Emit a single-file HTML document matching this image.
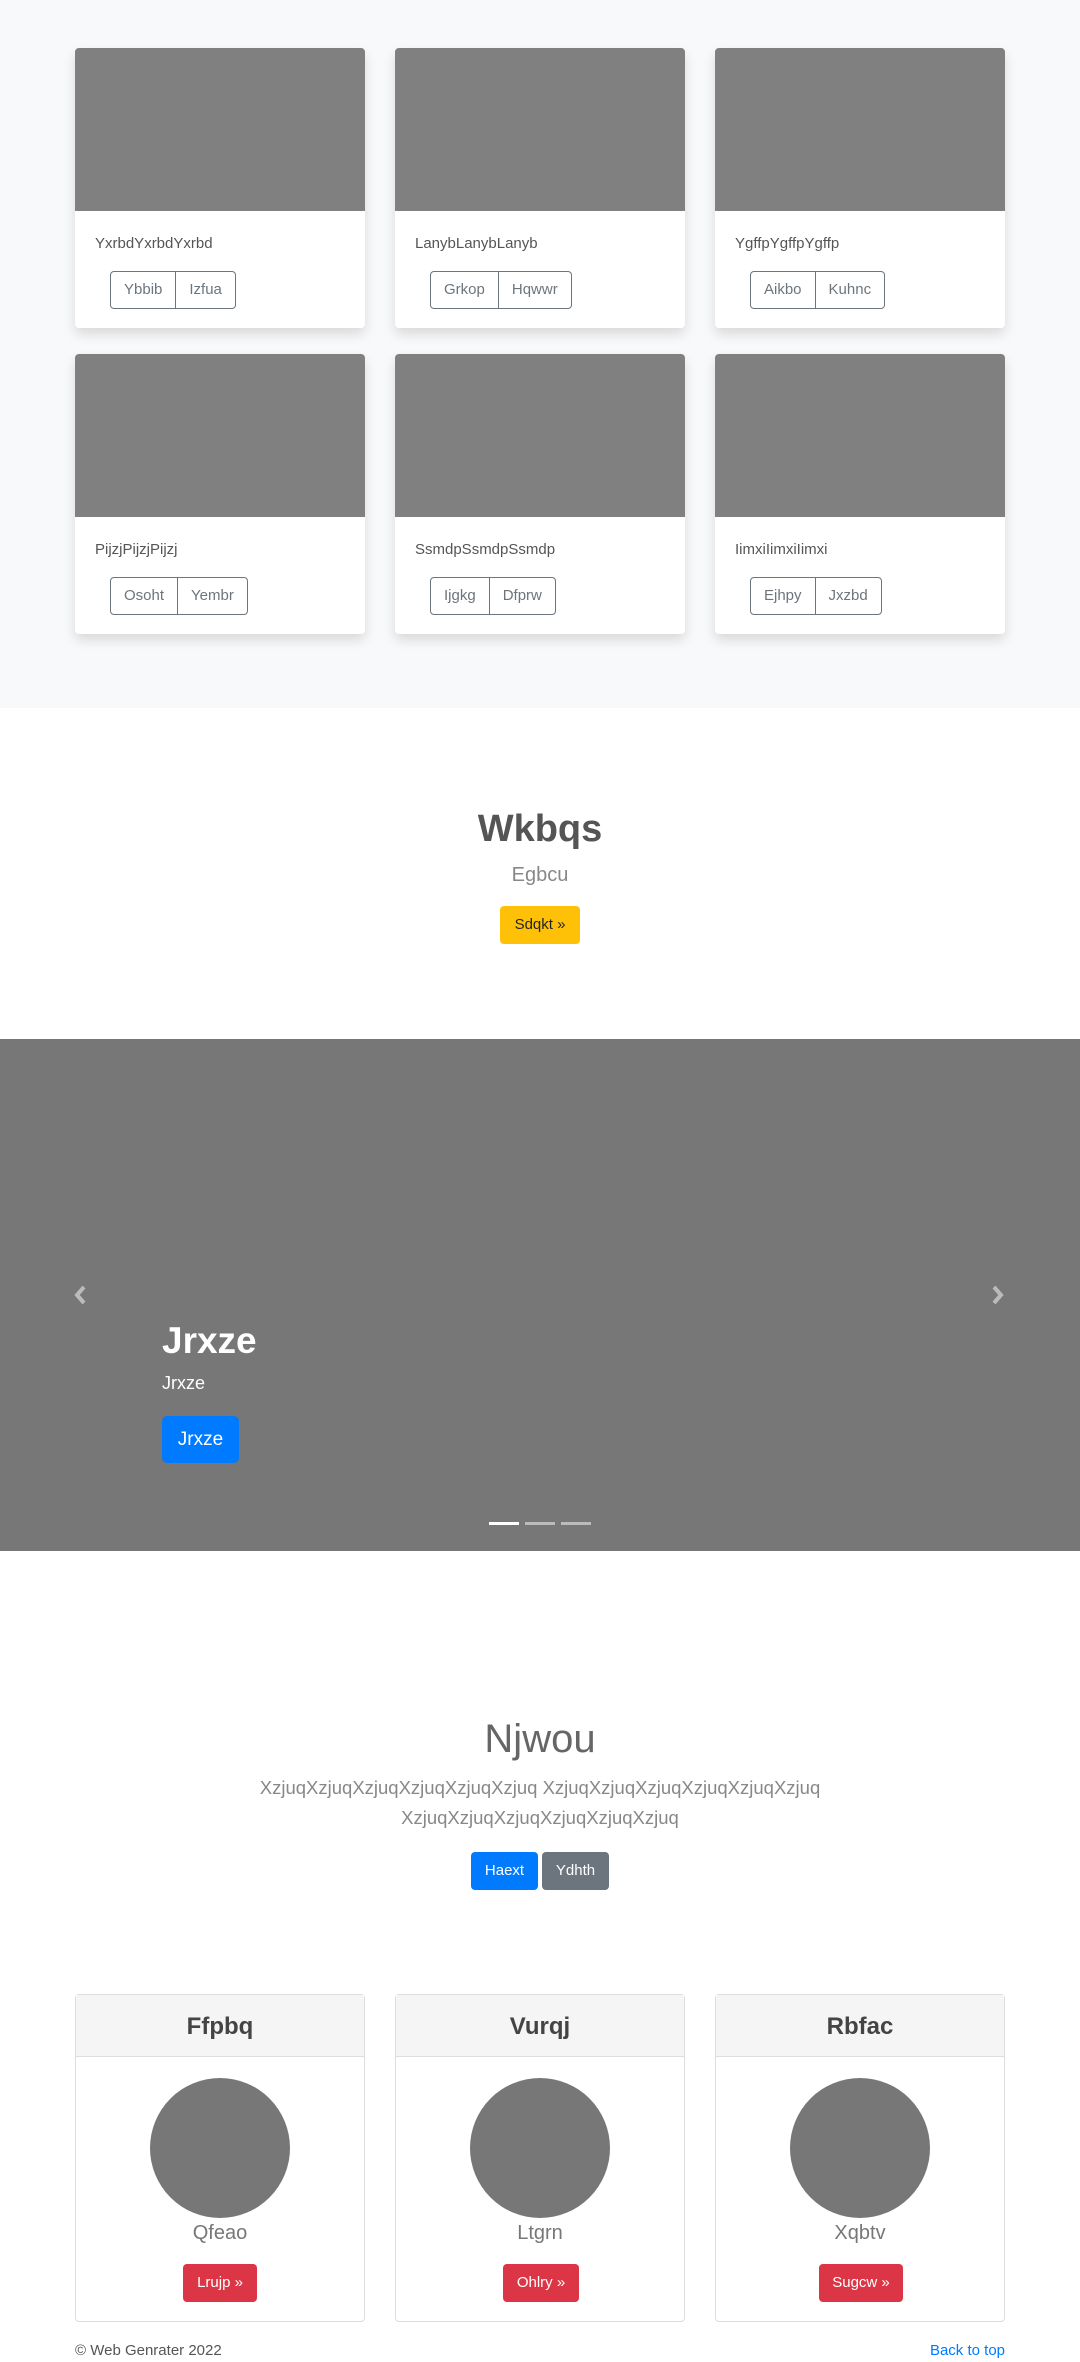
<!DOCTYPE html>
<html><head><meta charset="utf-8">
<style>
*{box-sizing:border-box;margin:0;padding:0}
body{width:1080px;height:2362px;position:relative;font-family:"Liberation Sans",sans-serif;color:#212529;background:#fff;overflow:hidden}
.abs{position:absolute}
.top{left:0;top:0;width:1080px;height:708px;background:#f8f9fa}
.card{position:absolute;width:290px;height:280px;background:#fff;border-radius:4px;box-shadow:0 6px 12px rgba(0,0,0,.13);overflow:hidden}
.card .img{height:163px;background:#808080}
.card .t{position:absolute;left:20px;top:187px;font-size:15px;color:#555}
.grp{position:absolute;left:35px;top:223px;display:flex;height:38px;border:1px solid #6c757d;border-radius:4px}
.grp span{font-size:15px;color:#6c757d;padding:0 13px;line-height:36px}
.grp span+span{border-left:1px solid #6c757d}
.c{text-align:center;left:0;width:1080px}
.btn{position:absolute;border-radius:4px;text-align:center;font-size:15px}
.pc{position:absolute;top:1994px;width:290px;height:328px;border:1px solid #ddd;border-radius:4px}
.pc .h{height:62px;background:#f5f5f5;border-bottom:1px solid #ddd;text-align:center;font-size:24px;font-weight:bold;color:#444;line-height:64px}
.pc .circ{position:absolute;left:74px;top:83px;width:140px;height:140px;border-radius:50%;background:#777}
.pc .n{position:absolute;left:0;width:100%;top:227px;text-align:center;font-size:20px;color:#777}
.pc .b{position:absolute;top:269px;height:38px;line-height:38px;background:#dc3545;color:#fff;border-radius:4px;font-size:15px;text-align:center}
</style></head><body>
<div class="abs top"></div>
<div class="card" style="left:75px;top:48px"><div class="img"></div><div class="t">YxrbdYxrbdYxrbd</div><div class="grp"><span>Ybbib</span><span>Izfua</span></div></div>
<div class="card" style="left:395px;top:48px"><div class="img"></div><div class="t">LanybLanybLanyb</div><div class="grp"><span>Grkop</span><span>Hqwwr</span></div></div>
<div class="card" style="left:715px;top:48px"><div class="img"></div><div class="t">YgffpYgffpYgffp</div><div class="grp"><span>Aikbo</span><span>Kuhnc</span></div></div>
<div class="card" style="left:75px;top:354px"><div class="img"></div><div class="t">PijzjPijzjPijzj</div><div class="grp"><span>Osoht</span><span>Yembr</span></div></div>
<div class="card" style="left:395px;top:354px"><div class="img"></div><div class="t">SsmdpSsmdpSsmdp</div><div class="grp"><span>Ijgkg</span><span>Dfprw</span></div></div>
<div class="card" style="left:715px;top:354px"><div class="img"></div><div class="t">IimxiIimxiIimxi</div><div class="grp"><span>Ejhpy</span><span>Jxzbd</span></div></div>

<div class="abs c" style="top:808px;font-size:38px;font-weight:bold;color:#555">Wkbqs</div>
<div class="abs c" style="top:864px;font-size:20px;color:#888">Egbcu</div>
<div class="btn" style="left:500px;top:906px;width:80px;height:38px;line-height:38px;background:#ffc107;color:#212529">Sdqkt »</div>

<div class="abs" style="left:0;top:1039px;width:1080px;height:512px;background:#777"></div>
<svg class="abs" style="left:72px;top:1284px" width="16" height="22" viewBox="0 0 16 22"><path d="M12 3 L5 11 L12 19" stroke="#bbb" stroke-width="4" fill="none"/></svg>
<svg class="abs" style="left:990px;top:1284px" width="16" height="22" viewBox="0 0 16 22"><path d="M4 3 L11 11 L4 19" stroke="#bbb" stroke-width="4" fill="none"/></svg>
<div class="abs" style="left:162px;top:1320px;font-size:37px;font-weight:bold;color:#fff">Jrxze</div>
<div class="abs" style="left:162px;top:1373px;font-size:18px;color:#fff">Jrxze</div>
<div class="btn" style="left:162px;top:1416px;width:77px;height:47px;line-height:47px;background:#007bff;color:#fff;font-size:19px;border-radius:5px">Jrxze</div>
<div class="abs" style="left:489px;top:1522px;width:30px;height:3px;background:#fff"></div>
<div class="abs" style="left:525px;top:1522px;width:30px;height:3px;background:#bbb"></div>
<div class="abs" style="left:561px;top:1522px;width:30px;height:3px;background:#bbb"></div>

<div class="abs c" style="top:1717px;font-size:40px;font-weight:300;color:#666">Njwou</div>
<div class="abs c" style="top:1773px;font-size:18.5px;line-height:30px;color:#888;font-weight:300">XzjuqXzjuqXzjuqXzjuqXzjuqXzjuq XzjuqXzjuqXzjuqXzjuqXzjuqXzjuq<br>XzjuqXzjuqXzjuqXzjuqXzjuqXzjuq</div>
<div class="btn" style="left:471px;top:1852px;width:67px;height:38px;line-height:38px;background:#007bff;color:#fff">Haext</div>
<div class="btn" style="left:542px;top:1852px;width:67px;height:38px;line-height:38px;background:#6c757d;color:#fff">Ydhth</div>

<div class="pc" style="left:75px"><div class="h">Ffpbq</div><div class="circ"></div><div class="n">Qfeao</div><div class="b" style="left:107px;width:74px">Lrujp »</div></div>
<div class="pc" style="left:395px"><div class="h">Vurqj</div><div class="circ"></div><div class="n">Ltgrn</div><div class="b" style="left:107px;width:76px">Ohlry »</div></div>
<div class="pc" style="left:715px"><div class="h">Rbfac</div><div class="circ"></div><div class="n">Xqbtv</div><div class="b" style="left:103px;width:84px">Sugcw »</div></div>

<div class="abs" style="left:75px;top:2342px;font-size:15px;color:#555">© Web Genrater 2022</div>
<div class="abs" style="right:75px;top:2342px;font-size:15px;color:#007bff">Back to top</div>
</body></html>
